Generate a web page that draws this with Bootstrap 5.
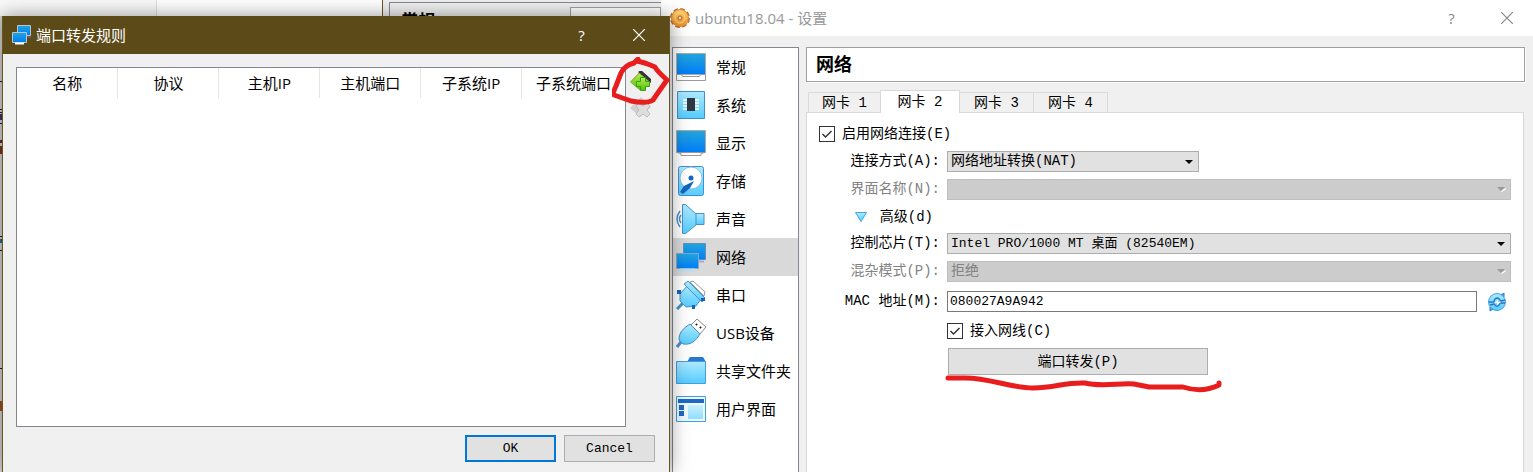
<!DOCTYPE html>
<html lang="zh-CN">
<head>
<meta charset="utf-8">
<meta name="viewport" content="width=device-width, initial-scale=1">
<title>ubuntu18.04 - 设置</title>
<link href="https://cdn.jsdelivr.net/npm/bootstrap@5.3.0/dist/css/bootstrap.min.css" rel="stylesheet">
<style>
  :root { --ui: "Open Sans", "Noto Sans CJK SC", sans-serif; --mono: "Liberation Mono", "Noto Sans CJK SC", monospace; }
  body { font-family: var(--mono); font-size: 14px; line-height: 20px; color: #000; background: #f0f0f0; }
  button, input, select { font: inherit; color: inherit; }
  .latin { font-size: 13px; }
  .desktop { display: grid; grid-template-columns: minmax(0, 661fr) minmax(0, 872fr); min-height: 100vh; overflow: hidden; }

  /* windows behind the dialog */
  .behind-edge { padding-left: 2px; background:
      linear-gradient(#222 0 0) 0 65px / 2px 1px no-repeat,
      linear-gradient(#222 0 0) 0 93px / 2px 1px no-repeat,
      linear-gradient(#222 0 0) 0 96px / 2px 1px no-repeat,
      linear-gradient(#403070 0 0) 0 98px / 2px 6px no-repeat,
      linear-gradient(#222 0 0) 0 107px / 2px 1px no-repeat,
      linear-gradient(#702030 0 0) 0 124px / 2px 3px no-repeat,
      linear-gradient(#803020 0 0) 0 130px / 2px 8px no-repeat,
      linear-gradient(#222 0 0) 0 220px / 2px 1px no-repeat,
      linear-gradient(#2a7090 0 0) 0 223px / 2px 4px no-repeat,
      linear-gradient(#222 0 0) 0 234px / 2px 1px no-repeat,
      linear-gradient(#222 0 0) 0 352px / 2px 1px no-repeat,
      linear-gradient(#a05020 0 0) 0 385px / 2px 10px no-repeat, #d5d5d1; }
  .strip { height: 16px; overflow: hidden; background: #fff; }
  .strip-a { flex: 158 0 0; background: #f9f9f9; border-right: 1px solid #e0e0e0; }
  .strip-b { flex: 228 0 0; border-right: 1px solid #6b5423; }
  .strip-c { flex: 275 0 0; background: #f0f0f0; padding: 2px 0 0 6px; }
  .strip-panel { border: 1px solid #828790; border-width: 1px 0 0 1px; height: 40px; padding-left: 11px; font: bold 17px/36px var(--ui); }
  .strip-box { border: 1px solid #a0a0a0; background: #fff; width: 35%; margin-top: 4px; }

  /* port forwarding dialog */
  .dialog-win { position: relative; z-index: 2; margin-right: -9px; border: 1px solid #6b5423; border-width: 0 1px; background: #f0f0f0; box-shadow: 0 0 18px rgba(0,0,0,.42); }
  .dialog-bar { height: 38px; background: #5c4a18; color: #fff; font: 15px/38px var(--ui); padding: 0 2px 0 9px; }
  .dialog-content { padding: 13px 14px 10px 13px; }
  .caption-btn { border: 0; background: none; padding: 0; width: 57px; display: flex; align-items: center; justify-content: center; }
  .rules { border: 1px solid #828790; background: #fff; }
  .rules table { table-layout: fixed; width: 100%; font: 15px/30px var(--ui); }
  .rules th { width: 16.6%; padding: 0; font-weight: 400; text-align: center; border-right: 1px solid #e5e5e5; white-space: nowrap; }
  .rules th:last-child { border-right: 0; width: auto; }
  .tools { width: 29px; flex: none; }
  .tool { border: 0; background: none; padding: 0; display: block; position: relative; width: 22px; height: 22px; line-height: 0; }
  .ink { position: absolute; pointer-events: none; fill: none; stroke: #e81e1e; stroke-linecap: round; stroke-linejoin: round; z-index: 3; }
  .ink-circle { left: -18px; top: -14px; }
  .ink-line { left: -4px; top: 26px; }
  .push { background: #e1e1e1; border: 1px solid #adadad; border-radius: 0; height: 27px; padding: 0; color: #000; }
  .push-dialog { width: 91px; }
  .push-default { border: 2px solid #0078d7; }

  /* settings window */
  .settings-bar { height: 36px; background: #fff; color: #999; font: 15px/34px var(--ui); padding-left: 8px; }
  .settings-bar .caption-btn { color: #888; }
  .settings-bar .caption-btn:last-child { width: 53px; }
  .settings-body { padding: 11px 8px 0 11px; gap: 7px; }
  .side { width: 127px; flex: none; background: #fff; border: 1px solid #828790; border-bottom: 0; font: 15px/38px var(--ui); }
  .side a { display: flex; align-items: center; gap: 10px; height: 38px; padding-left: 3px; color: #000; text-decoration: none; white-space: nowrap; }
  .side a.active { background: #d9d9d9; }
  .side svg { flex: none; }
  .page-title { border: 1px solid #a0a0a0; background: #fff; height: 35px; font: bold 18px/33px var(--ui); padding-left: 9px; margin: 0; box-shadow: 1px 1px #fff; }
  .tabs { margin-top: 8px; height: 23px; padding-left: 2px; margin-bottom: -1px; position: relative; }
  .tabs button { height: 21px; width: 75px; padding: 0; background: #f0f0f0; border: 1px solid #d9d9d9; margin-right: -1px; line-height: 20px; white-space: pre; }
  .tabs button:first-child { width: 73px; }
  .tabs button.active { height: 23px; width: 80px; background: #fff; border-bottom: 0; }
  .pane { background: #fff; border: 1px solid #d9d9d9; border-bottom: 0; margin-right: 1px; padding: 11px 12px 0; }
  .check-row { gap: 7px; margin-bottom: 7px; }
  .tick { appearance: none; width: 16px; height: 16px; border: 1px solid #333; margin: 0; background: #fff; flex: none; }
  .tick:checked { background: #fff url("data:image/svg+xml,%3Csvg xmlns='http://www.w3.org/2000/svg' viewBox='0 0 14 14'%3E%3Cpath d='M2.5 7l3 3 6-6' fill='none' stroke='%23333' stroke-width='1.5'/%3E%3C/svg%3E"); }
  .fields { display: grid; grid-template-columns: 121px minmax(0, 1fr); column-gap: 7px; }
  .fields > label { grid-column: 1; text-align: right; white-space: nowrap; line-height: 21px; }
  .fields > .span-field { grid-column: 2; }
  .muted { color: #838383; }
  .combo { appearance: none; display: block; width: 100%; height: 21px; border: 1px solid #adadad; border-radius: 0; padding: 0 20px 0 3px; line-height: 19px; color: #000;
    background: #e1e1e1 url("data:image/svg+xml,%3Csvg xmlns='http://www.w3.org/2000/svg' width='8' height='4'%3E%3Cpath d='M0 0h8L4 4z'/%3E%3C/svg%3E") no-repeat right 5px top 8px; }
  .combo:disabled { opacity: 1; color: #838383; border-color: #bfbfbf; background: #ccc url("data:image/svg+xml,%3Csvg xmlns='http://www.w3.org/2000/svg' width='9' height='5'%3E%3Cpath d='M9 1v1L5 5 4 4z' fill='%23fff'/%3E%3Cpath d='M0 0h8L4 4z' fill='%23999'/%3E%3C/svg%3E") no-repeat right 4px top 7px; }
  .combo-short { width: 252px; max-width: 100%; }
  .mac { height: 21px; border: 1px solid #7a7a7a; padding: 0 2px; min-width: 0; background: #fff; }
  .gap-row { margin-bottom: 7px; }
  .gap-tight { margin-bottom: 6px; }
  .gap-wide { margin-bottom: 9px; }
  .forward { width: 260px; max-width: 100%; }
  .forward-wrap { padding-left: 1px; }
  .plain { border: 0; background: none; padding: 0; }
  .advanced { margin-right: 7px; }
  .refresh { width: 34px; height: 21px; padding-left: 6px; }
</style>
</head>
<body>
<svg width="0" height="0" class="position-absolute" aria-hidden="true">
  <defs>
    <linearGradient id="blue" x2="0" y2="1"><stop stop-color="#24a5dc"/><stop offset="1" stop-color="#007df8"/></linearGradient>
    <linearGradient id="sky" x2="0" y2="1"><stop stop-color="#aeeaff"/><stop offset="1" stop-color="#55ccff"/></linearGradient>
    <linearGradient id="gold" x2="0" y2="1"><stop stop-color="#ffd36b"/><stop offset="1" stop-color="#f0912c"/></linearGradient>
    <linearGradient id="leaf" x2="0" y2="1"><stop stop-color="#b4ec50"/><stop offset="1" stop-color="#4cc40c"/></linearGradient>
  </defs>
</svg>
<div class="desktop">
  <div class="d-flex flex-column">
    <div class="strip d-flex flex-shrink-0" aria-hidden="true">
      <div class="strip-a"></div>
      <div class="strip-b"></div>
      <div class="strip-c"><div class="strip-panel d-flex justify-content-between"><span>常规</span><span class="strip-box"></span></div></div>
    </div>
    <div class="behind-edge d-flex flex-column flex-grow-1">
      <section class="dialog-win d-flex flex-column flex-grow-1">
        <header class="dialog-bar d-flex align-items-center">
          <svg width="20" height="20" viewBox="0 0 20 20" stroke="#b5c6cc"><path d="M5.500 .5h13v10h-13z" fill="url(#blue)"/><path d="M14 12h5" stroke="#777"/><path d="M.5 7.500h14v10H.5z" fill="url(#blue)"/><path d="M3 18.500h9" stroke="#fff" stroke-width="2"/></svg>
          <span class="flex-grow-1 ms-1">端口转发规则</span>
          <button class="caption-btn" type="button">?</button>
          <button class="caption-btn" type="button" aria-label="关闭"><svg width="12" height="12" viewBox="0 0 12 12" stroke="#fff" stroke-width="1.200"><path d="M0 0l12 12M12 0L0 12"/></svg></button>
        </header>
        <div class="dialog-content d-flex flex-column flex-grow-1">
          <div class="d-flex flex-grow-1">
            <div class="rules flex-grow-1">
              <table>
                <thead><tr><th scope="col">名称</th><th scope="col">协议</th><th scope="col">主机IP</th><th scope="col">主机端口</th><th scope="col">子系统IP</th><th scope="col">子系统端口</th></tr></thead>
              </table>
            </div>
            <div class="tools d-flex flex-column gap-1 ps-1 pt-1">
              <button class="tool" type="button" aria-label="添加规则">
                <svg width="22" height="22" viewBox="0 0 22 22"><path d="M8 1l3-2 10 9v4z" fill="#333"/><path d="M.5 11L9 2l10 9-9 8z" fill="url(#leaf)" stroke="#7ab030"/><path d="M2 10l7-8" stroke="#d69a3a"/><path d="M10.500 6.500h5v4h4v5h-4v4h-5v-4h-4v-5h4z" fill="url(#leaf)" stroke="#3c9c10"/></svg>
                <svg class="ink ink-circle" width="60" height="50" viewBox="0 0 60 50" stroke-width="5"><path d="M26 2L22 6Q13 8 9 16L4 29Q0 37 2 38L19 44Q35 47 41 43Q45 37 55 23Q45 14 43 10Q32 5 24 4"/></svg>
              </button>
              <button class="tool" type="button" disabled aria-label="删除规则">
                <svg width="22" height="22" viewBox="0 0 22 22"><path d="M0 11L11 0l10 10-11 10z" fill="#d0d0d0"/><path d="M9 6l4 3 4-3 3 3-3 4 3 4-3 3-4-3-4 3-3-3 3-4-3-4z" fill="#ddd" stroke="#bcbcbc"/></svg>
              </button>
            </div>
          </div>
          <div class="d-flex justify-content-end gap-2 pt-2">
            <button class="push push-dialog push-default latin" type="button">OK</button>
            <button class="push push-dialog latin" type="button">Cancel</button>
          </div>
        </div>
      </section>
    </div>
  </div>

  <section class="d-flex flex-column">
    <header class="settings-bar d-flex align-items-center">
      <svg width="22" height="22" viewBox="0 0 22 22"><circle cx="11" cy="11" r="8.500" fill="none" stroke="#c06a2c" stroke-width="3" stroke-dasharray="4.400 2.280"/><circle cx="11" cy="11" r="8.500" fill="url(#gold)" stroke="#e08a34"/><circle cx="11" cy="11" r="5" fill="none" stroke="#ffd98a"/><circle cx="11" cy="11" r="2" fill="#ffe5b0" stroke="#b8601f"/></svg>
      <span class="flex-grow-1 ms-1">ubuntu18.04 - 设置</span>
      <button class="caption-btn" type="button">?</button>
      <button class="caption-btn" type="button" aria-label="关闭"><svg width="12" height="12" viewBox="0 0 12 12" stroke="#888" stroke-width="1.200"><path d="M0 0l12 12M12 0L0 12"/></svg></button>
    </header>
    <div class="settings-body d-flex flex-grow-1">
      <nav class="side">
        <a href="#general"><svg width="30" height="30" viewBox="0 0 30 30"><path d="M.5 1.500h29v21H.5z" fill="url(#blue)" stroke="#aaa"/><path d="M.5 22.500h5l1 2h17l1-2h5v6H.5z" fill="#fff" stroke="#999"/></svg>常规</a>
        <a href="#system"><svg width="30" height="30" viewBox="0 0 30 30"><path d="M1.500 1.500h27v27h-27z" fill="url(#sky)" stroke="#3f8fd0"/><path d="M7 10h16M7 13h16M7 16h16M7 19h16" stroke="#fff" stroke-width="1.500"/><path d="M11 8h8v13h-8z" fill="#303844"/></svg>系统</a>
        <a href="#display"><svg width="30" height="30" viewBox="0 0 30 30"><path d="M.5 2.500h29v22H.5z" fill="url(#blue)" stroke="#aaa"/><path d="M1 24.500h28l-4 1v2H5v-2z" fill="#fff" stroke="#999"/></svg>显示</a>
        <a href="#storage"><svg width="30" height="30" viewBox="0 0 30 30"><rect x="2.500" y=".5" width="25" height="29" rx="2" fill="url(#sky)" stroke="#3f8fd0"/><circle cx="15" cy="12" r="11" fill="#fff" stroke="#8bc0e0"/><circle cx="15" cy="12" r="2.500" fill="#1565c0"/><path d="M4 26l4-6 10-5-4 7-7 6z" fill="#1565c0"/></svg>存储</a>
        <a href="#audio"><svg width="30" height="30" viewBox="0 0 30 30" fill="url(#sky)" stroke="#4a90c8"><path d="M18 9.500h10v11H18z"/><path d="M6.500.5h3L20 10v11L9.500 29.500h-3z"/><path d="M4 7q-6 8 0 16M5 11q-3 4 0 8" fill="none" stroke-width="1.500"/></svg>声音</a>
        <a class="active" href="#network" aria-current="page"><svg width="30" height="30" viewBox="0 0 30 30"><path d="M7.500 1.500h22v16h-22z" fill="url(#blue)" stroke="#6090b8"/><path d="M23 19.500h5" stroke="#aac" stroke-width="2"/><path d="M.5 11.500h22v15H.5z" fill="url(#blue)" stroke="#80a8c8"/><path d="M4 28h15" stroke="#bde" stroke-width="3"/></svg>网络</a>
        <a href="#serial"><svg width="30" height="30" viewBox="0 0 30 30" stroke="#4a90c8" stroke-linejoin="round"><path d="M14 2l3-1 12 11-1 4z" fill="#fff" stroke="#999"/><path d="M1 29l6-6" stroke-width="3"/><path d="M4 14l8-9 13 14-5 7-10 1-6-6z" fill="url(#sky)"/><path d="M8 4l4-3 17 17-3 4z" fill="url(#sky)"/><path d="M3 10v4M16 27h3M27 18v3" stroke="#1565c0" stroke-width="4"/></svg>串口</a>
        <a href="#usb"><svg width="30" height="30" viewBox="0 0 30 30" stroke="#4a90c8"><path d="M15 7l6-6 9 8-6 7z" fill="#fff" stroke="#888"/><path d="M20 6h1v1h-1zM24 9h1v1h-1z" stroke="#222"/><path d="M1 29l4-5" stroke-width="3"/><path d="M3 22Q2 13 14 6l10 10q-7 12-17 10z" fill="url(#sky)"/></svg>USB设备</a>
        <a href="#shared"><svg width="30" height="30" viewBox="0 0 30 30"><path d="M11 6l3-5h13l3 5z" fill="#2878d0"/><path d="M.5 5.500h29v22H.5z" fill="url(#sky)" stroke="#3f9fe0"/></svg>共享文件夹</a>
        <a href="#ui"><svg width="30" height="30" viewBox="0 0 30 30"><path d="M.5 2.500h29v25H.5z" fill="#eef8ff" stroke="#3f9fe0"/><path d="M2 5h26v4H2zM3 11h5v5H3zM3 17h5v5H3z" fill="#1f68c8"/><path d="M12 11h15v14H12z" fill="url(#sky)" opacity=".6"/></svg>用户界面</a>
      </nav>
      <main class="d-flex flex-column flex-grow-1">
        <h1 class="page-title">网络</h1>
        <div class="tabs d-flex align-items-end" role="tablist">
          <button type="button" role="tab">网卡 1</button>
          <button type="button" role="tab" class="active" aria-selected="true">网卡 2</button>
          <button type="button" role="tab">网卡 3</button>
          <button type="button" role="tab">网卡 4</button>
        </div>
        <form class="pane flex-grow-1">
          <div class="check-row d-flex align-items-center">
            <input class="tick" type="checkbox" id="enable" checked><label for="enable">启用网络连接(E)</label>
          </div>
          <div class="fields">
            <label class="gap-row" for="attach">连接方式(A):</label>
            <div><select class="combo combo-short" id="attach"><option>网络地址转换(NAT)</option></select></div>
            <label class="gap-row muted" for="ifname">界面名称(N):</label>
            <div><select class="combo" id="ifname" disabled><option></option></select></div>
            <div class="text-end gap-tight"><button class="plain advanced text-nowrap" type="button" aria-expanded="true"><svg class="me-1" width="12" height="10" viewBox="0 0 12 10"><path d="M.5 .5h11L6 9.500z" fill="url(#sky)" stroke="#3fa4e8"/></svg> 高级(d)</button></div>
            <label class="gap-row" for="chip">控制芯片(T):</label>
            <div><select class="combo latin" id="chip"><option>Intel PRO/1000 MT 桌面 (82540EM)</option></select></div>
            <label class="muted gap-wide" for="promisc">混杂模式(P):</label>
            <div><select class="combo" id="promisc" disabled><option>拒绝</option></select></div>
            <label class="gap-wide" for="mac">MAC 地址(M):</label>
            <div class="d-flex">
              <input class="mac latin flex-grow-1" id="mac" type="text" value="080027A9A942">
              <button class="plain refresh d-flex justify-content-center align-items-center" type="button" aria-label="刷新"><svg width="20" height="20" viewBox="0 0 20 20"><circle cx="10" cy="10" r="8.500" fill="url(#sky)" stroke="#4a9ce0"/><path d="M2 10h5q0-4 4-4l3 3 4-1M18 11h-5q-1 4-4 3l-2-2-4 1" fill="none" stroke="#2878c8" stroke-width="1.300"/><path d="M7 11l4-3v2h3l-4 3v-2z" fill="#fff"/><path d="M14 3l3-2v4M6 17l-3 2v-4" fill="#55b0f0" stroke="#2878c8"/></svg></button>
            </div>
            <div class="check-row span-field d-flex align-items-center">
              <input class="tick" type="checkbox" id="cable" checked><label for="cable">接入网线(C)</label>
            </div>
            <div class="forward-wrap span-field position-relative">
              <button class="push forward" type="button">端口转发(P)</button>
              <svg class="ink ink-line" width="284" height="20" viewBox="0 0 284 20" stroke-width="5"><path d="M5 4H20C45 3 66 14 90 14C112 14 122 8 142 9C158 13 176 9 191 10L206 13H240C255 18 268 15 276 11V9"/></svg>
            </div>
          </div>
        </form>
      </main>
    </div>
  </section>
</div>
<script src="https://cdn.jsdelivr.net/npm/bootstrap@5.3.0/dist/js/bootstrap.bundle.min.js"></script>
</body>
</html>
